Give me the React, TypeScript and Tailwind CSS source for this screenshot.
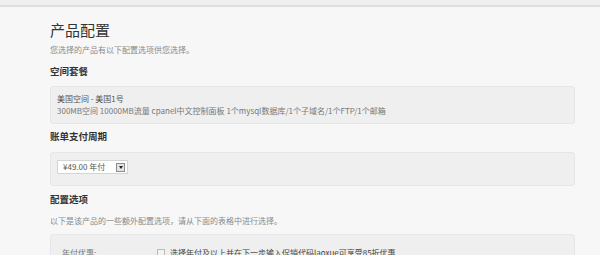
export default function App() {
  return (
    <div className="min-h-screen bg-[#f7f7f7] font-['Noto_Sans_CJK_SC',sans-serif] text-[#333]">
      <div className="h-[7px] bg-[#efefef] border-b-2 border-[#dedede]" />
      <div className="pl-[50px] pr-[25px]">
        <h1 className="mt-[13px] text-[15px] leading-[20px] text-[#333]">产品配置</h1>
        <p className="mt-[5px] text-[8px] leading-[10px] text-[#8a8a8a]">
          您选择的产品有以下配置选项供您选择。
        </p>

        <h2 className="mt-[10px] text-[9.5px] leading-[12px] font-bold text-[#333]">空间套餐</h2>
        <div className="mt-[9px] rounded-[3px] border border-[#e6e6e6] bg-[#efefef] px-[6px] py-[6px] text-[8px] leading-[12px]">
          <div className="text-[#555]">美国空间 - 美国1号</div>
          <div className="text-[#777]">
            300MB空间 10000MB流量 cpanel中文控制面板 1个mysql数据库/1个子域名/1个FTP/1个邮箱
          </div>
        </div>

        <h2 className="mt-[6px] text-[9.5px] leading-[12px] font-bold text-[#333]">账单支付周期</h2>
        <div className="mt-[10px] rounded-[3px] border border-[#e6e6e6] bg-[#efefef] pl-[6px] pt-[7px] pb-[11px]">
          <div className="flex h-[14px] w-[71px] items-center justify-between border border-[#d4d4d4] bg-white pl-[5px] pr-[2px] text-[8px] text-[#555]">
            <span>¥49.00 年付</span>
            <span className="flex h-[9px] w-[9px] items-center justify-center border border-[#8c8c8c] bg-[#e4e4e4]">
              <span className="h-0 w-0 border-x-[2.5px] border-t-[3px] border-x-transparent border-t-[#222]" />
            </span>
          </div>
        </div>

        <h2 className="mt-[7px] text-[9.5px] leading-[12px] font-bold text-[#333]">配置选项</h2>
        <p className="mt-[10px] text-[8px] leading-[12px] text-[#8a8a8a]">
          以下是该产品的一些额外配置选项，请从下面的表格中进行选择。
        </p>
        <div className="mt-[7px] h-[40px] rounded-[3px] border border-[#e6e6e6] bg-[#efefef] pl-[11px] pt-[12px]">
          <div className="flex items-center text-[8px] leading-[12px]">
            <span className="w-[95px] text-[#777]">年付优惠:</span>
            <span className="mr-[5px] h-[8px] w-[8px] border border-[#bbb] bg-[#f3f3f3]" />
            <span className="text-[#444]">选择年付及以上并在下一步输入促销代码laoxue可享受85折优惠</span>
          </div>
        </div>
      </div>
    </div>
  );
}
